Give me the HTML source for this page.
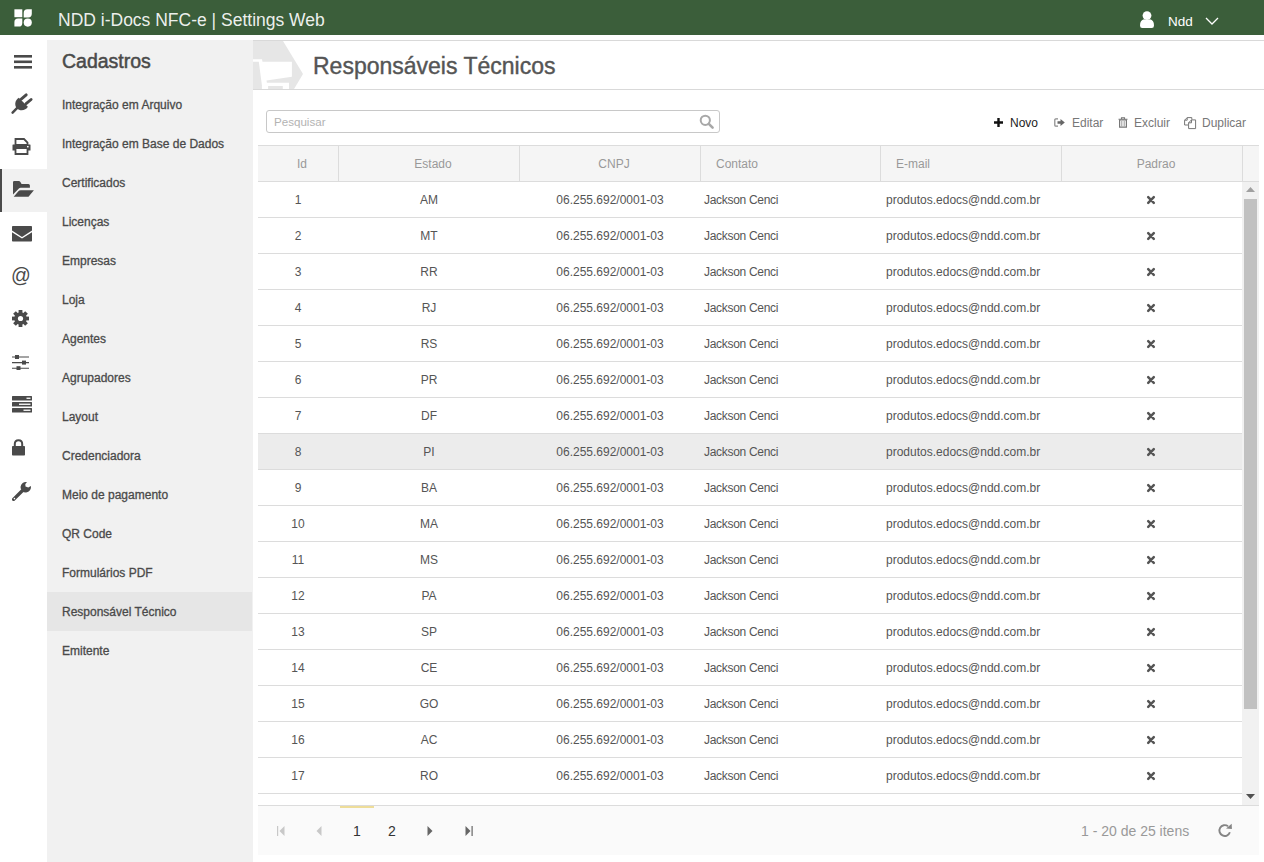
<!DOCTYPE html>
<html><head><meta charset="utf-8">
<style>
*{box-sizing:border-box;margin:0;padding:0}
html,body{width:1264px;height:862px;overflow:hidden;background:#fff;font-family:"Liberation Sans",sans-serif;color:#555;position:relative}
.abs{position:absolute}
#hdr{position:absolute;left:0;top:0;width:1264px;height:35px;background:#3b5e3a}
#hdr .title{position:absolute;left:58px;top:10px;font-size:17.5px;color:rgba(255,255,255,0.92);line-height:20px;white-space:nowrap}
#iconbar{position:absolute;left:0;top:40px;width:47px;height:822px;background:#fff}
.ib{position:absolute;left:0;width:47px;height:43px}
.ib.sel{background:#f1f1f1;border-left:2px solid #4a4a4a}
.ib.sel svg{margin-left:-2px}
.ib svg{position:absolute}
#side{position:absolute;left:47px;top:40px;width:206px;height:822px;background:#f1f1f1}
#side h2{position:absolute;left:15px;top:9px;font-size:19.5px;font-weight:400;color:#4a4a4a;line-height:24px;-webkit-text-stroke:0.5px #4a4a4a;white-space:nowrap}
.mi{position:absolute;left:0;width:205px;height:39px;font-size:12px;line-height:41px;padding-left:15px;color:#4a4a4a;-webkit-text-stroke:0.3px #4a4a4a;white-space:nowrap}
.mi.sel{background:#e6e6e6}
#titlebar{position:absolute;left:253px;top:40px;width:1011px;height:50px;border-top:1px solid #d9d9d9;border-bottom:1px solid #d9d9d9;overflow:hidden;background:#fff}
#titlebar h1{position:absolute;left:60px;top:11px;font-size:23px;font-weight:400;color:#555;line-height:28px;-webkit-text-stroke:0.4px #555;white-space:nowrap}
#search{position:absolute;left:266px;top:110px;width:454px;height:23px;border:1px solid #c8c8c8;border-radius:3px;background:#fff}
#search span{position:absolute;left:7px;top:4px;font-size:11.6px;color:#b3b3b3;line-height:14px}
.tb{position:absolute;top:116px;font-size:12px;line-height:14px;color:#777;white-space:nowrap}
#grid{position:absolute;left:258px;top:145px;width:1001px;height:660px;border-top:1px solid #dcdcdc;overflow:hidden}
#ghead{position:absolute;left:0;top:0;width:1001px;height:36px;background:#f5f5f5;border-bottom:1px solid #dcdcdc}
.hc{position:absolute;top:0;height:35px;line-height:37px;font-size:12px;color:#999;border-left:1px solid #dcdcdc;white-space:nowrap}
.hc:first-child{border-left:none}
#gbody{position:absolute;left:0;top:36px;width:984px;height:624px;overflow:hidden}
.row{position:absolute;left:0;width:984px;height:36px;border-bottom:1px solid #dcdcdc;background:#fff}
.row.hov{background:#ececec}
.c{position:absolute;top:0;line-height:37px;font-size:12px;color:#555;white-space:nowrap}
#vs{position:absolute;left:984px;top:36px;width:17px;height:624px;background:#f1f1f1}
#pager{position:absolute;left:258px;top:805px;width:1001px;height:50px;background:#fafafa;border-top:1px solid #dcdcdc}
</style></head><body>
<div id="hdr">
  <svg class="abs" style="left:14px;top:9px" width="18" height="18" viewBox="0 0 18 18" fill="#fff"><rect x="0.4" y="0.3" width="7.9" height="7.9"/><path d="M9.7 3.9 A3.6 3.6 0 0 1 13.299999999999999 0.3 H17.799999999999997 V4.8 A3.6 3.6 0 0 1 14.2 8.4 H9.7 Z"/><path d="M0.4 13.2 A3.6 3.6 0 0 1 4.0 9.6 H8.3 V13.9 A3.6 3.6 0 0 1 4.7 17.5 H0.4 Z"/><circle cx="13.75" cy="13.6" r="4.05"/></svg>
  <div class="title">NDD i-Docs NFC-e | Settings Web</div>
  <svg class="abs" style="left:1140px;top:11px" width="15" height="17" viewBox="0 0 15 17" fill="#fff">
    <ellipse cx="7" cy="4.6" rx="4.4" ry="4.4"/>
    <path d="M0 14.5 Q0 9 4 8.2 Q7 9.8 10 8.2 Q14 9 14 14.5 Q14 17 11.8 17 H2.2 Q0 17 0 14.5Z"/>
  </svg>
  <div class="abs" style="left:1168px;top:14px;font-size:13.5px;line-height:16px;color:#fff">Ndd</div>
  <svg class="abs" style="left:1205px;top:17px" width="14" height="8" viewBox="0 0 14 8"><path d="M1 1 L7 7 L13 1" fill="none" stroke="#fff" stroke-width="1.3"/></svg>
</div>
<div id="iconbar"><div class="ib" style="top:0px"><svg style="left:14px;top:15px" width="18" height="14" viewBox="0 0 18 14"><rect x="0" y="0" width="18" height="2.6" fill="#4a4a4a"/><rect x="0" y="5.5" width="18" height="2.6" fill="#4a4a4a"/><rect x="0" y="11" width="18" height="2.6" fill="#4a4a4a"/></svg></div><div class="ib" style="top:43px"><svg style="left:10px;top:8px" width="24" height="24" viewBox="0 0 24 24"><path d="M2.6 21.6 L7 17.2" stroke="#4a4a4a" stroke-width="2.5" stroke-linecap="round"/><path d="M8.8 6.8 L17.9 15.8 C16 19.5 10 20.5 7 17.5 C4 14.5 5 9 8.8 6.8 Z" fill="#4a4a4a"/><path d="M11.2 8.1 L16.2 3.9 M16.1 12.7 L21.1 8.5" stroke="#4a4a4a" stroke-width="2.9" stroke-linecap="round"/></svg></div><div class="ib" style="top:86px"><svg style="left:12px;top:12px" width="19" height="18" viewBox="0 0 19 18"><path d="M3.5 1 H12 L15.5 4.5 V7 H3.5 Z" fill="none" stroke="#4a4a4a" stroke-width="1.8"/><path d="M1 6.5 H18 Q18.5 6.5 18.5 7 V12.5 H16 V11 H3 V12.5 H0.5 V7 Q0.5 6.5 1 6.5Z" fill="#4a4a4a"/><path d="M3.5 11 V16 H15.5 V11" fill="none" stroke="#4a4a4a" stroke-width="1.8"/><rect x="15" y="8" width="1.6" height="1.4" fill="#fff"/></svg></div><div class="ib sel" style="top:129px"><svg style="left:12px;top:12px" width="23" height="17" viewBox="0 0 23 17"><path d="M1 1.2 Q1 0 2.2 0 H6.8 Q7.8 0 8.4 1 L9.6 3.1 H16.4 Q17.9 3.1 17.9 4.6 V6.8 H8.6 Q7.6 6.8 6.9 7.6 L1 13.4 Z" fill="#4a4a4a"/><path d="M8.8 9.2 H21.9 L16.5 15.8 H1.7 L6.4 10.2 Q7.2 9.2 8.8 9.2 Z" fill="#4a4a4a"/></svg></div><div class="ib" style="top:172px"><svg style="left:12px;top:14px" width="20" height="16" viewBox="0 0 20 16"><path d="M0.8 0 H19.2 Q20 0 20 0.8 V4.6 L10 11 L0 4.6 V0.8 Q0 0 0.8 0Z" fill="#4a4a4a"/><path d="M0 6.2 L10 12.6 L20 6.2 V14.7 Q20 15.5 19.2 15.5 H0.8 Q0 15.5 0 14.7Z" fill="#4a4a4a"/></svg></div><div class="ib" style="top:215px"><div style="position:absolute;left:11px;top:9px;font-size:19.5px;line-height:22px;color:#4a4a4a">@</div></div><div class="ib" style="top:258px"><svg style="left:12px;top:12px" width="17" height="17" viewBox="-8.5 -8.5 17 17"><g fill="#4a4a4a"><rect x="-1.9" y="-8.5" width="3.8" height="4" transform="rotate(0)"/><rect x="-1.9" y="-8.5" width="3.8" height="4" transform="rotate(45)"/><rect x="-1.9" y="-8.5" width="3.8" height="4" transform="rotate(90)"/><rect x="-1.9" y="-8.5" width="3.8" height="4" transform="rotate(135)"/><rect x="-1.9" y="-8.5" width="3.8" height="4" transform="rotate(180)"/><rect x="-1.9" y="-8.5" width="3.8" height="4" transform="rotate(225)"/><rect x="-1.9" y="-8.5" width="3.8" height="4" transform="rotate(270)"/><rect x="-1.9" y="-8.5" width="3.8" height="4" transform="rotate(315)"/><circle r="6.2"/></g><circle r="2.6" fill="#fff"/></svg></div><div class="ib" style="top:301px"><svg style="left:12px;top:14px" width="18" height="15" viewBox="0 0 18 15"><g stroke="#4a4a4a" stroke-width="1.1"><path d="M0 2 H17 M0 7.6 H17 M0 13.2 H17"/></g><g fill="#4a4a4a"><rect x="3" y="0" width="4" height="4"/><rect x="10" y="5.6" width="4" height="4"/><rect x="4.5" y="11.2" width="4" height="4"/></g></svg></div><div class="ib" style="top:344px"><svg style="left:12px;top:12px" width="20" height="17" viewBox="0 0 20 17"><g fill="#4a4a4a"><rect x="0" y="0" width="20" height="4.5" rx="0.5"/><rect x="0" y="6" width="20" height="4.5" rx="0.5"/><rect x="0" y="12" width="20" height="4.5" rx="0.5"/></g><g fill="#fff"><rect x="14.5" y="1.6" width="4" height="1.3"/><rect x="7" y="7.6" width="11.5" height="1.3"/><rect x="11.5" y="13.6" width="7" height="1.3"/></g></svg></div><div class="ib" style="top:387px"><svg style="left:12px;top:12px" width="13" height="17" viewBox="0 0 13 17"><path d="M2.8 7 V5 Q2.8 1.2 6.5 1.2 Q10.2 1.2 10.2 5 V7" fill="none" stroke="#4a4a4a" stroke-width="2"/><rect x="0" y="7" width="13" height="9.5" rx="0.8" fill="#4a4a4a"/></svg></div><div class="ib" style="top:430px"><svg style="left:12px;top:11px" width="20" height="20" viewBox="0 0 20 20"><path d="M1.6 18.4 L10 10" stroke="#4a4a4a" stroke-width="3.4" stroke-linecap="round"/><path d="M15 1.2 A5.2 5.2 0 1 0 18.8 5 L16.3 6.5 L13.5 5.5 L13.3 3 Z" fill="#4a4a4a"/><circle cx="2.4" cy="17.6" r="0.8" fill="#fff"/></svg></div></div>
<div id="side"><h2>Cadastros</h2><div class="mi" style="top:45px">Integração em Arquivo</div><div class="mi" style="top:84px">Integração em Base de Dados</div><div class="mi" style="top:123px">Certificados</div><div class="mi" style="top:162px">Licenças</div><div class="mi" style="top:201px">Empresas</div><div class="mi" style="top:240px">Loja</div><div class="mi" style="top:279px">Agentes</div><div class="mi" style="top:318px">Agrupadores</div><div class="mi" style="top:357px">Layout</div><div class="mi" style="top:396px">Credenciadora</div><div class="mi" style="top:435px">Meio de pagamento</div><div class="mi" style="top:474px">QR Code</div><div class="mi" style="top:513px">Formulários PDF</div><div class="mi sel" style="top:552px">Responsável Técnico</div><div class="mi" style="top:591px">Emitente</div></div>
<div id="titlebar">
  <svg class="abs" style="left:0;top:0" width="60" height="48" viewBox="0 0 60 48">
    <path d="M0 0 H30 L50 33 L41 48 H0 Z" fill="#e6e6e6"/>
    <g fill="#fff">
      <path d="M0 18.3 H9 L9.5 20.75 H38.9 V35.75 L13.5 39.5 L13.9 41.7 H36 V45.1 H9 L5.8 20.75 H0 Z"/>
      <rect x="8.9" y="45" width="6.2" height="3"/><rect x="29.8" y="45" width="6.2" height="3"/>
    </g>
  </svg>
  <h1>Responsáveis Técnicos</h1></div>
<div id="search"><span>Pesquisar</span>
  <svg class="abs" style="left:432px;top:3px" width="16" height="16" viewBox="0 0 16 16"><circle cx="6.3" cy="6.3" r="4.6" fill="none" stroke="#a8a8a8" stroke-width="2"/><path d="M9.8 9.8 L13.6 13.6" stroke="#a8a8a8" stroke-width="2.6" stroke-linecap="round"/></svg>
</div>
<svg class="abs" style="left:994px;top:118px" width="9" height="9" viewBox="0 0 9 9"><path d="M4.5 0 V9 M0 4.5 H9" stroke="#111" stroke-width="2.4"/></svg>
<div class="tb" style="left:1010px;color:#222">Novo</div>
<svg class="abs" style="left:1054px;top:118px" width="11" height="9" viewBox="0 0 11 9"><path d="M4 0.8 H1.8 Q0.8 0.8 0.8 1.8 V7.2 Q0.8 8.2 1.8 8.2 H4" fill="none" stroke="#888" stroke-width="1.2"/><path d="M3.5 3.3 H6.5 V1 L10.8 4.5 L6.5 8 V5.7 H3.5Z" fill="#666"/></svg>
<div class="tb" style="left:1072px">Editar</div>
<svg class="abs" style="left:1118px;top:117px" width="10" height="11" viewBox="0 0 10 11"><path d="M0.5 2.3 H9.5 M3.5 2 V0.8 H6.5 V2" fill="none" stroke="#777" stroke-width="1.1"/><path d="M1.6 3 H8.4 V10.2 H1.6Z" fill="none" stroke="#777" stroke-width="1.2"/><path d="M3.8 4 V9.4 M6.2 4 V9.4" stroke="#999" stroke-width="1"/></svg>
<div class="tb" style="left:1134px">Excluir</div>
<svg class="abs" style="left:1184px;top:117px" width="13" height="13" viewBox="0 0 13 13"><path d="M4 8 H0.6 V3.2 L3.2 0.6 H7.8 V2.6 M0.6 3.2 H3.2 V0.6" fill="none" stroke="#777" stroke-width="1"/><path d="M4.6 5.8 L7.5 2.9 H11.6 V11.6 H4.6 Z M4.6 5.8 H7.5 V2.9" fill="none" stroke="#777" stroke-width="1"/></svg>
<div class="tb" style="left:1202px">Duplicar</div>
<div id="grid">
  <div id="ghead"><div class="hc" style="left:0px;width:80px;text-align:center;padding-left:8px">Id</div><div class="hc" style="left:80px;width:181px;text-align:center;padding-left:8px">Estado</div><div class="hc" style="left:261px;width:181px;text-align:center;padding-left:8px">CNPJ</div><div class="hc" style="left:442px;width:180px;padding-left:15px">Contato</div><div class="hc" style="left:622px;width:181px;padding-left:15px">E-mail</div><div class="hc" style="left:803px;width:181px;text-align:center;padding-left:8px">Padrao</div><div class="hc" style="left:984px;width:17px"></div></div>
  <div id="gbody"><div class="row" style="top:0px"><div class="c" style="left:0;width:80px;text-align:center">1</div><div class="c" style="left:81px;width:180px;text-align:center">AM</div><div class="c" style="left:262px;width:180px;text-align:center">06.255.692/0001-03</div><div class="c" style="left:446px;letter-spacing:-0.3px">Jackson Cenci</div><div class="c" style="left:628px">produtos.edocs@ndd.com.br</div><svg class="abs" style="left:888px;top:13px" width="10" height="10" viewBox="0 0 10 10"><path d="M2.2 2.2 L7.8 7.8 M7.8 2.2 L2.2 7.8" stroke="#555" stroke-width="2.5" stroke-linecap="round"/></svg></div><div class="row" style="top:36px"><div class="c" style="left:0;width:80px;text-align:center">2</div><div class="c" style="left:81px;width:180px;text-align:center">MT</div><div class="c" style="left:262px;width:180px;text-align:center">06.255.692/0001-03</div><div class="c" style="left:446px;letter-spacing:-0.3px">Jackson Cenci</div><div class="c" style="left:628px">produtos.edocs@ndd.com.br</div><svg class="abs" style="left:888px;top:13px" width="10" height="10" viewBox="0 0 10 10"><path d="M2.2 2.2 L7.8 7.8 M7.8 2.2 L2.2 7.8" stroke="#555" stroke-width="2.5" stroke-linecap="round"/></svg></div><div class="row" style="top:72px"><div class="c" style="left:0;width:80px;text-align:center">3</div><div class="c" style="left:81px;width:180px;text-align:center">RR</div><div class="c" style="left:262px;width:180px;text-align:center">06.255.692/0001-03</div><div class="c" style="left:446px;letter-spacing:-0.3px">Jackson Cenci</div><div class="c" style="left:628px">produtos.edocs@ndd.com.br</div><svg class="abs" style="left:888px;top:13px" width="10" height="10" viewBox="0 0 10 10"><path d="M2.2 2.2 L7.8 7.8 M7.8 2.2 L2.2 7.8" stroke="#555" stroke-width="2.5" stroke-linecap="round"/></svg></div><div class="row" style="top:108px"><div class="c" style="left:0;width:80px;text-align:center">4</div><div class="c" style="left:81px;width:180px;text-align:center">RJ</div><div class="c" style="left:262px;width:180px;text-align:center">06.255.692/0001-03</div><div class="c" style="left:446px;letter-spacing:-0.3px">Jackson Cenci</div><div class="c" style="left:628px">produtos.edocs@ndd.com.br</div><svg class="abs" style="left:888px;top:13px" width="10" height="10" viewBox="0 0 10 10"><path d="M2.2 2.2 L7.8 7.8 M7.8 2.2 L2.2 7.8" stroke="#555" stroke-width="2.5" stroke-linecap="round"/></svg></div><div class="row" style="top:144px"><div class="c" style="left:0;width:80px;text-align:center">5</div><div class="c" style="left:81px;width:180px;text-align:center">RS</div><div class="c" style="left:262px;width:180px;text-align:center">06.255.692/0001-03</div><div class="c" style="left:446px;letter-spacing:-0.3px">Jackson Cenci</div><div class="c" style="left:628px">produtos.edocs@ndd.com.br</div><svg class="abs" style="left:888px;top:13px" width="10" height="10" viewBox="0 0 10 10"><path d="M2.2 2.2 L7.8 7.8 M7.8 2.2 L2.2 7.8" stroke="#555" stroke-width="2.5" stroke-linecap="round"/></svg></div><div class="row" style="top:180px"><div class="c" style="left:0;width:80px;text-align:center">6</div><div class="c" style="left:81px;width:180px;text-align:center">PR</div><div class="c" style="left:262px;width:180px;text-align:center">06.255.692/0001-03</div><div class="c" style="left:446px;letter-spacing:-0.3px">Jackson Cenci</div><div class="c" style="left:628px">produtos.edocs@ndd.com.br</div><svg class="abs" style="left:888px;top:13px" width="10" height="10" viewBox="0 0 10 10"><path d="M2.2 2.2 L7.8 7.8 M7.8 2.2 L2.2 7.8" stroke="#555" stroke-width="2.5" stroke-linecap="round"/></svg></div><div class="row" style="top:216px"><div class="c" style="left:0;width:80px;text-align:center">7</div><div class="c" style="left:81px;width:180px;text-align:center">DF</div><div class="c" style="left:262px;width:180px;text-align:center">06.255.692/0001-03</div><div class="c" style="left:446px;letter-spacing:-0.3px">Jackson Cenci</div><div class="c" style="left:628px">produtos.edocs@ndd.com.br</div><svg class="abs" style="left:888px;top:13px" width="10" height="10" viewBox="0 0 10 10"><path d="M2.2 2.2 L7.8 7.8 M7.8 2.2 L2.2 7.8" stroke="#555" stroke-width="2.5" stroke-linecap="round"/></svg></div><div class="row hov" style="top:252px"><div class="c" style="left:0;width:80px;text-align:center">8</div><div class="c" style="left:81px;width:180px;text-align:center">PI</div><div class="c" style="left:262px;width:180px;text-align:center">06.255.692/0001-03</div><div class="c" style="left:446px;letter-spacing:-0.3px">Jackson Cenci</div><div class="c" style="left:628px">produtos.edocs@ndd.com.br</div><svg class="abs" style="left:888px;top:13px" width="10" height="10" viewBox="0 0 10 10"><path d="M2.2 2.2 L7.8 7.8 M7.8 2.2 L2.2 7.8" stroke="#555" stroke-width="2.5" stroke-linecap="round"/></svg></div><div class="row" style="top:288px"><div class="c" style="left:0;width:80px;text-align:center">9</div><div class="c" style="left:81px;width:180px;text-align:center">BA</div><div class="c" style="left:262px;width:180px;text-align:center">06.255.692/0001-03</div><div class="c" style="left:446px;letter-spacing:-0.3px">Jackson Cenci</div><div class="c" style="left:628px">produtos.edocs@ndd.com.br</div><svg class="abs" style="left:888px;top:13px" width="10" height="10" viewBox="0 0 10 10"><path d="M2.2 2.2 L7.8 7.8 M7.8 2.2 L2.2 7.8" stroke="#555" stroke-width="2.5" stroke-linecap="round"/></svg></div><div class="row" style="top:324px"><div class="c" style="left:0;width:80px;text-align:center">10</div><div class="c" style="left:81px;width:180px;text-align:center">MA</div><div class="c" style="left:262px;width:180px;text-align:center">06.255.692/0001-03</div><div class="c" style="left:446px;letter-spacing:-0.3px">Jackson Cenci</div><div class="c" style="left:628px">produtos.edocs@ndd.com.br</div><svg class="abs" style="left:888px;top:13px" width="10" height="10" viewBox="0 0 10 10"><path d="M2.2 2.2 L7.8 7.8 M7.8 2.2 L2.2 7.8" stroke="#555" stroke-width="2.5" stroke-linecap="round"/></svg></div><div class="row" style="top:360px"><div class="c" style="left:0;width:80px;text-align:center">11</div><div class="c" style="left:81px;width:180px;text-align:center">MS</div><div class="c" style="left:262px;width:180px;text-align:center">06.255.692/0001-03</div><div class="c" style="left:446px;letter-spacing:-0.3px">Jackson Cenci</div><div class="c" style="left:628px">produtos.edocs@ndd.com.br</div><svg class="abs" style="left:888px;top:13px" width="10" height="10" viewBox="0 0 10 10"><path d="M2.2 2.2 L7.8 7.8 M7.8 2.2 L2.2 7.8" stroke="#555" stroke-width="2.5" stroke-linecap="round"/></svg></div><div class="row" style="top:396px"><div class="c" style="left:0;width:80px;text-align:center">12</div><div class="c" style="left:81px;width:180px;text-align:center">PA</div><div class="c" style="left:262px;width:180px;text-align:center">06.255.692/0001-03</div><div class="c" style="left:446px;letter-spacing:-0.3px">Jackson Cenci</div><div class="c" style="left:628px">produtos.edocs@ndd.com.br</div><svg class="abs" style="left:888px;top:13px" width="10" height="10" viewBox="0 0 10 10"><path d="M2.2 2.2 L7.8 7.8 M7.8 2.2 L2.2 7.8" stroke="#555" stroke-width="2.5" stroke-linecap="round"/></svg></div><div class="row" style="top:432px"><div class="c" style="left:0;width:80px;text-align:center">13</div><div class="c" style="left:81px;width:180px;text-align:center">SP</div><div class="c" style="left:262px;width:180px;text-align:center">06.255.692/0001-03</div><div class="c" style="left:446px;letter-spacing:-0.3px">Jackson Cenci</div><div class="c" style="left:628px">produtos.edocs@ndd.com.br</div><svg class="abs" style="left:888px;top:13px" width="10" height="10" viewBox="0 0 10 10"><path d="M2.2 2.2 L7.8 7.8 M7.8 2.2 L2.2 7.8" stroke="#555" stroke-width="2.5" stroke-linecap="round"/></svg></div><div class="row" style="top:468px"><div class="c" style="left:0;width:80px;text-align:center">14</div><div class="c" style="left:81px;width:180px;text-align:center">CE</div><div class="c" style="left:262px;width:180px;text-align:center">06.255.692/0001-03</div><div class="c" style="left:446px;letter-spacing:-0.3px">Jackson Cenci</div><div class="c" style="left:628px">produtos.edocs@ndd.com.br</div><svg class="abs" style="left:888px;top:13px" width="10" height="10" viewBox="0 0 10 10"><path d="M2.2 2.2 L7.8 7.8 M7.8 2.2 L2.2 7.8" stroke="#555" stroke-width="2.5" stroke-linecap="round"/></svg></div><div class="row" style="top:504px"><div class="c" style="left:0;width:80px;text-align:center">15</div><div class="c" style="left:81px;width:180px;text-align:center">GO</div><div class="c" style="left:262px;width:180px;text-align:center">06.255.692/0001-03</div><div class="c" style="left:446px;letter-spacing:-0.3px">Jackson Cenci</div><div class="c" style="left:628px">produtos.edocs@ndd.com.br</div><svg class="abs" style="left:888px;top:13px" width="10" height="10" viewBox="0 0 10 10"><path d="M2.2 2.2 L7.8 7.8 M7.8 2.2 L2.2 7.8" stroke="#555" stroke-width="2.5" stroke-linecap="round"/></svg></div><div class="row" style="top:540px"><div class="c" style="left:0;width:80px;text-align:center">16</div><div class="c" style="left:81px;width:180px;text-align:center">AC</div><div class="c" style="left:262px;width:180px;text-align:center">06.255.692/0001-03</div><div class="c" style="left:446px;letter-spacing:-0.3px">Jackson Cenci</div><div class="c" style="left:628px">produtos.edocs@ndd.com.br</div><svg class="abs" style="left:888px;top:13px" width="10" height="10" viewBox="0 0 10 10"><path d="M2.2 2.2 L7.8 7.8 M7.8 2.2 L2.2 7.8" stroke="#555" stroke-width="2.5" stroke-linecap="round"/></svg></div><div class="row" style="top:576px"><div class="c" style="left:0;width:80px;text-align:center">17</div><div class="c" style="left:81px;width:180px;text-align:center">RO</div><div class="c" style="left:262px;width:180px;text-align:center">06.255.692/0001-03</div><div class="c" style="left:446px;letter-spacing:-0.3px">Jackson Cenci</div><div class="c" style="left:628px">produtos.edocs@ndd.com.br</div><svg class="abs" style="left:888px;top:13px" width="10" height="10" viewBox="0 0 10 10"><path d="M2.2 2.2 L7.8 7.8 M7.8 2.2 L2.2 7.8" stroke="#555" stroke-width="2.5" stroke-linecap="round"/></svg></div><div class="row" style="top:612px"><div class="c" style="left:0;width:80px;text-align:center">18</div><div class="c" style="left:81px;width:180px;text-align:center">XX</div><div class="c" style="left:262px;width:180px;text-align:center">06.255.692/0001-03</div><div class="c" style="left:446px;letter-spacing:-0.3px">Jackson Cenci</div><div class="c" style="left:628px">produtos.edocs@ndd.com.br</div><svg class="abs" style="left:888px;top:13px" width="10" height="10" viewBox="0 0 10 10"><path d="M2.2 2.2 L7.8 7.8 M7.8 2.2 L2.2 7.8" stroke="#555" stroke-width="2.5" stroke-linecap="round"/></svg></div></div>
  <div id="vs">
  <svg class="abs" style="left:4px;top:5px" width="9" height="5" viewBox="0 0 9 5"><path d="M0 5 L4.5 0 L9 5Z" fill="#a0a0a0"/></svg>
  <div class="abs" style="left:2px;top:17px;width:13px;height:510px;background:#c1c1c1"></div>
  <svg class="abs" style="left:4px;top:612px" width="9" height="5" viewBox="0 0 9 5"><path d="M0 0 L4.5 5 L9 0Z" fill="#505050"/></svg>
</div>
</div>
<div id="pager">
  <div class="abs" style="left:82px;top:0;width:34px;height:2px;background:#eedd99"></div>
  <svg class="abs" style="left:19px;top:20px" width="8" height="10" viewBox="0 0 8 10"><rect x="0" y="0" width="1.2" height="10" fill="#c8c8c8"/><path d="M7.5 0 V10 L2.5 5Z" fill="#c8c8c8"/></svg>
  <svg class="abs" style="left:58px;top:20px" width="6" height="10" viewBox="0 0 6 10"><path d="M5.5 0 V10 L0.5 5Z" fill="#c8c8c8"/></svg>
  <div class="abs" style="left:95px;top:17px;font-size:14px;line-height:16px;color:#333">1</div>
  <div class="abs" style="left:130px;top:17px;font-size:14px;line-height:16px;color:#333">2</div>
  <svg class="abs" style="left:169px;top:20px" width="6" height="10" viewBox="0 0 6 10"><path d="M0.5 0 V10 L5.5 5Z" fill="#666"/></svg>
  <svg class="abs" style="left:207px;top:20px" width="8" height="10" viewBox="0 0 8 10"><path d="M0.5 0 V10 L5.5 5Z" fill="#666"/><rect x="6.5" y="0" width="1.2" height="10" fill="#666"/></svg>
  <div class="abs" style="left:823px;top:17px;font-size:14px;line-height:16px;color:#999;white-space:nowrap">1 - 20 de 25 itens</div>
  <svg class="abs" style="left:959px;top:17px" width="16" height="16" viewBox="0 0 16 16"><path d="M12.9 9.3 A5.4 5.4 0 1 1 11 3.2" fill="none" stroke="#858585" stroke-width="1.9"/><path d="M9 5.6 L14.9 6 L14.7 0.7 Z" fill="#858585"/></svg>
</div>
</body></html>
